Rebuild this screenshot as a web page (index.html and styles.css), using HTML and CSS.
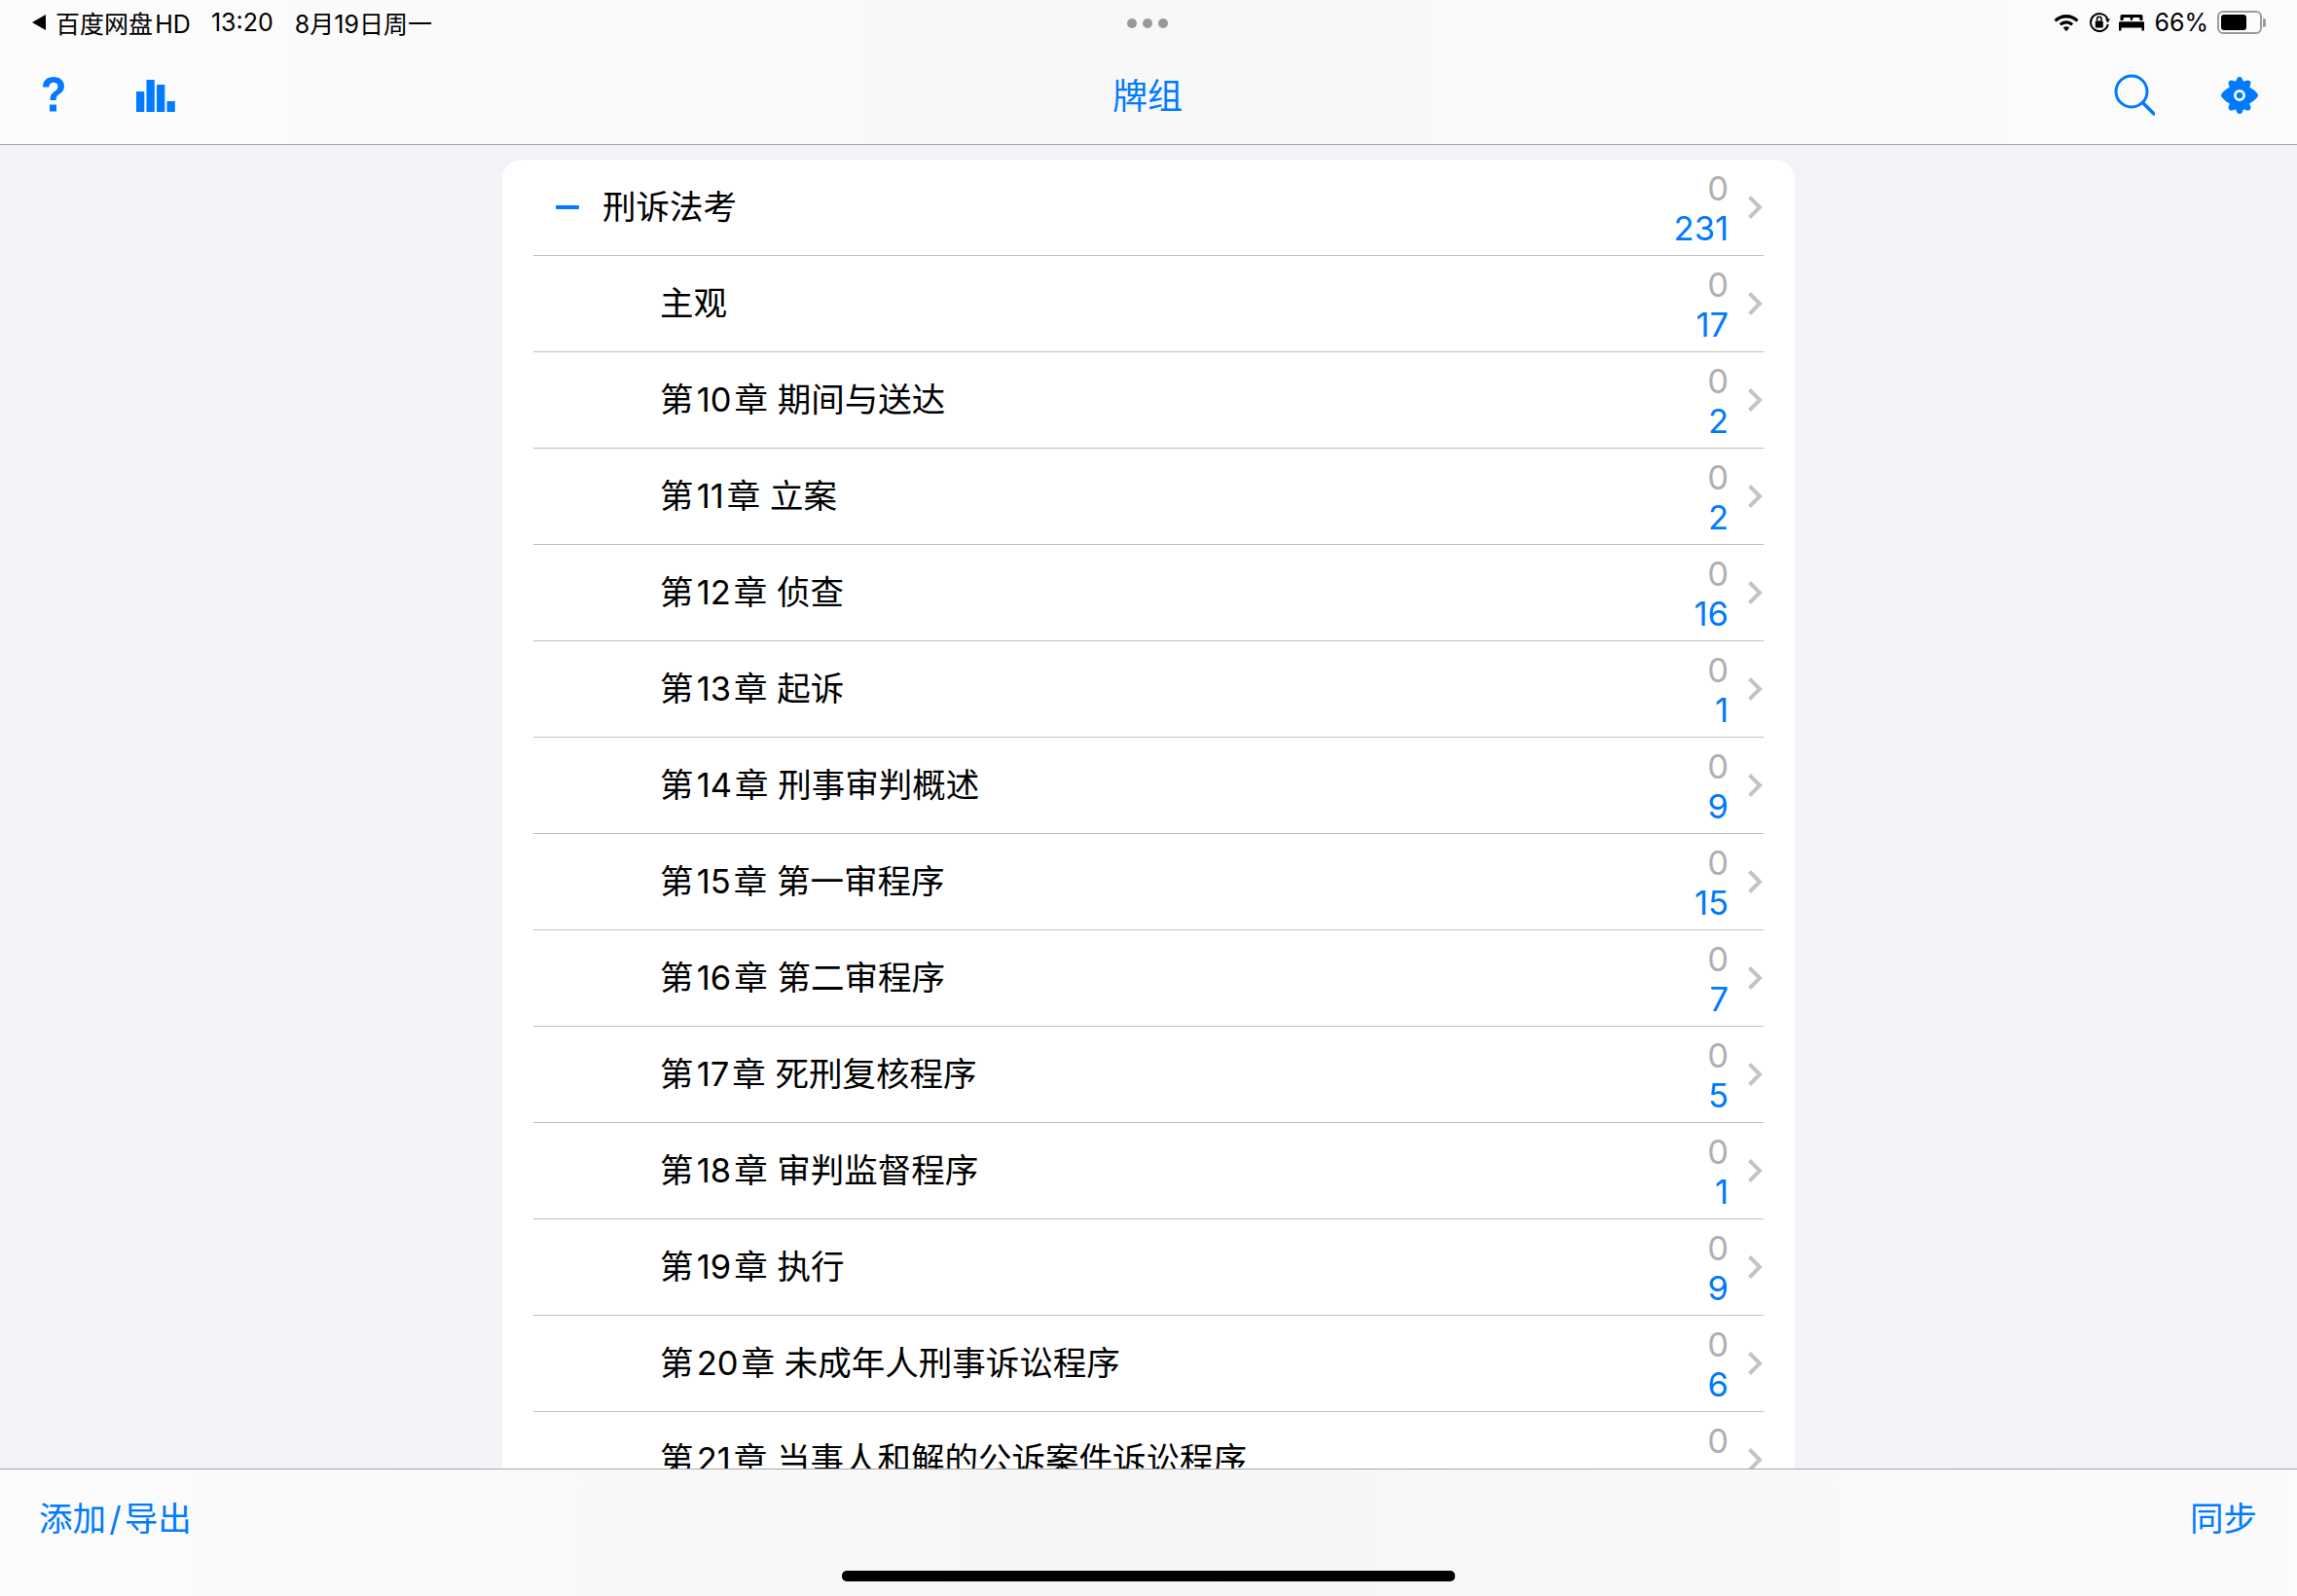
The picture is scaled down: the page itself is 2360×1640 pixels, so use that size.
FILE: index.html
```html
<!DOCTYPE html>
<html lang="zh-CN">
<head>
<meta charset="utf-8">
<title>牌组</title>
<link rel="stylesheet" href="styles.css">
</head>
<body>
<div class="screen">
  <header class="topbar">
    <div class="status">
      <div class="status-left">
        <svg class="back" width="14" height="16" viewBox="0 0 14 16"><path d="M14 0V16L0 8Z"/></svg>
        <span class="app">百度网盘&#8202;HD</span>
        <span class="time">13:20</span>
        <span>8月19日周一</span>
      </div>
      <div class="dots"><i></i><i></i><i></i></div>
      <div class="status-right">
        <svg width="28" height="22" viewBox="0 0 28 22"><path d="M14 3C9 3 4.800 5 1.500 8.200L3.600 10.600C6.300 7.900 10 6.400 14 6.400S21.700 7.900 24.400 10.600L26.500 8.200C23.200 5 19 3 14 3ZM14 9.200C11.300 9.200 8.800 10.300 6.800 12.200L9 14.600C10.400 13.300 12.100 12.500 14 12.500S17.600 13.300 19 14.600L21.200 12.200C19.200 10.300 16.700 9.200 14 9.200ZM14 15.200C12.800 15.200 11.700 15.700 10.800 16.500L14 20.200L17.200 16.500C16.300 15.700 15.200 15.200 14 15.200Z"/></svg>
        <svg class="lock" width="22" height="22" viewBox="0 0 22 22"><path d="M19.500 8A9 9 0 1 0 19.800 13" fill="none" stroke="#000" stroke-width="2"/><path d="M17 7.500H22L19.500 11.500Z"/><rect x="6.800" y="9.500" width="8" height="7" rx="1"/><path d="M8.500 9.500V7.500A2.300 2.300 0 0 1 13.100 7.500V9.500" fill="none" stroke="#000" stroke-width="1.500"/></svg>
        <svg class="bed" width="26" height="18" viewBox="0 0 26 18"><path d="M3 1H23A1.500 1.500 0 0 1 24.500 2.500V7H21.500V5.500A1.500 1.500 0 0 0 20 4H15.500A1.500 1.500 0 0 0 14 5.500V7H12V5.500A1.500 1.500 0 0 0 10.500 4H6A1.500 1.500 0 0 0 4.500 5.500V7H1.500V2.500A1.500 1.500 0 0 1 3 1ZM1 8.200H25A1 1 0 0 1 26 9.200V17.500H23.500V14.500H2.500V17.500H0V9.200A1 1 0 0 1 1 8.200Z"/></svg>
        <span class="pct">66%</span>
        <div class="battery"><div class="battery-fill"></div></div>
        <div class="battery-tip"></div>
      </div>
    </div>
    <nav class="navbar">
      <div class="nav-group">
        <svg class="ic-help" width="24" height="38" viewBox="0 0 24 38"><path d="M1 11.500C1 5 5.500 1 12 1C18.500 1 23 5 23 10.500C23 14.500 21 16.700 17.800 18.800C15.300 20.500 14.800 21.500 14.800 25H8.500C8.500 20.300 9.800 18.200 13 16C15.700 14.200 16.500 13 16.500 10.800C16.500 8.400 14.800 6.800 12 6.800C9.200 6.800 7.500 8.500 7.300 11.500ZM8 29.500H15V36.500H8Z"/></svg>
        <svg class="ic-chart" width="40" height="33" viewBox="0 0 40 33"><rect x="0" y="12" width="8.300" height="21"/><rect x="10.500" y="0" width="8.300" height="33"/><rect x="21" y="5" width="8.300" height="28"/><rect x="31.500" y="22" width="8.300" height="11"/></svg>
      </div>
      <h1 class="title">牌组</h1>
      <div class="nav-group nav-right">
        <svg class="ic-search" width="42" height="44" viewBox="0 0 42 44"><circle cx="18" cy="18" r="16" fill="none" stroke="#007aff" stroke-width="3"/><path d="M29.500 29.500L41 41" fill="none" stroke="#007aff" stroke-width="3.500" stroke-linecap="round"/></svg>
        <svg class="ic-gear" width="38" height="38" viewBox="0 0 38 38"><path fill-rule="evenodd" d="M19 0C20.800 0 21.700 1.200 22.300 3.300C22.600 4.400 23.700 4.900 24.700 4.300C26.800 3.200 28.300 3 29.600 4.300C30.900 5.600 30.700 7.200 29.600 9.200C29 10.200 29.500 11.300 30.600 11.600C32.700 12.300 38 17 38 19C38 21 32.700 25.700 30.600 26.400C29.500 26.700 29 27.800 29.600 28.800C30.700 30.800 30.900 32.400 29.600 33.700C28.300 35 26.800 34.800 24.700 33.700C23.700 33.100 22.600 33.600 22.300 34.700C21.700 36.800 20.800 38 19 38C17.200 38 16.300 36.800 15.700 34.700C15.400 33.600 14.300 33.100 13.300 33.700C11.200 34.800 9.700 35 8.400 33.700C7.100 32.400 7.300 30.800 8.400 28.800C9 27.800 8.500 26.700 7.400 26.400C5.300 25.700 0 21 0 19C0 17 5.300 12.300 7.400 11.600C8.500 11.300 9 10.200 8.400 9.200C7.300 7.200 7.100 5.600 8.400 4.300C9.700 3 11.200 3.200 13.300 4.300C14.300 4.900 15.400 4.400 15.700 3.300C16.300 1.200 17.200 0 19 0ZM19 13A6 6 0 1 0 19 25A6 6 0 1 0 19 13ZM19 15.800A3.200 3.200 0 1 1 19 22.200A3.200 3.200 0 1 1 19 15.800Z"/></svg>
      </div>
    </nav>
  </header>

  <main class="content">
    <section class="card">
      <div class="row row-parent"><span class="toggle"></span><span class="name">刑诉法考</span><div class="counts"><span class="c-new">0</span><span class="c-due">231</span></div><svg class="chev" width="16" height="26" viewBox="0 0 16 26"><path d="M2.500 2.500L13 13L2.500 23.500"/></svg></div>
      <div class="row"><span class="name">主观</span><div class="counts"><span class="c-new">0</span><span class="c-due">17</span></div><svg class="chev" width="16" height="26" viewBox="0 0 16 26"><path d="M2.500 2.500L13 13L2.500 23.500"/></svg></div>
      <div class="row"><span class="name">第&#8202;10&#8202;章 期间与送达</span><div class="counts"><span class="c-new">0</span><span class="c-due">2</span></div><svg class="chev" width="16" height="26" viewBox="0 0 16 26"><path d="M2.500 2.500L13 13L2.500 23.500"/></svg></div>
      <div class="row"><span class="name">第&#8202;11&#8202;章 立案</span><div class="counts"><span class="c-new">0</span><span class="c-due">2</span></div><svg class="chev" width="16" height="26" viewBox="0 0 16 26"><path d="M2.500 2.500L13 13L2.500 23.500"/></svg></div>
      <div class="row"><span class="name">第&#8202;12&#8202;章 侦查</span><div class="counts"><span class="c-new">0</span><span class="c-due">16</span></div><svg class="chev" width="16" height="26" viewBox="0 0 16 26"><path d="M2.500 2.500L13 13L2.500 23.500"/></svg></div>
      <div class="row"><span class="name">第&#8202;13&#8202;章 起诉</span><div class="counts"><span class="c-new">0</span><span class="c-due">1</span></div><svg class="chev" width="16" height="26" viewBox="0 0 16 26"><path d="M2.500 2.500L13 13L2.500 23.500"/></svg></div>
      <div class="row"><span class="name">第&#8202;14&#8202;章 刑事审判概述</span><div class="counts"><span class="c-new">0</span><span class="c-due">9</span></div><svg class="chev" width="16" height="26" viewBox="0 0 16 26"><path d="M2.500 2.500L13 13L2.500 23.500"/></svg></div>
      <div class="row"><span class="name">第&#8202;15&#8202;章 第一审程序</span><div class="counts"><span class="c-new">0</span><span class="c-due">15</span></div><svg class="chev" width="16" height="26" viewBox="0 0 16 26"><path d="M2.500 2.500L13 13L2.500 23.500"/></svg></div>
      <div class="row"><span class="name">第&#8202;16&#8202;章 第二审程序</span><div class="counts"><span class="c-new">0</span><span class="c-due">7</span></div><svg class="chev" width="16" height="26" viewBox="0 0 16 26"><path d="M2.500 2.500L13 13L2.500 23.500"/></svg></div>
      <div class="row"><span class="name">第&#8202;17&#8202;章 死刑复核程序</span><div class="counts"><span class="c-new">0</span><span class="c-due">5</span></div><svg class="chev" width="16" height="26" viewBox="0 0 16 26"><path d="M2.500 2.500L13 13L2.500 23.500"/></svg></div>
      <div class="row"><span class="name">第&#8202;18&#8202;章 审判监督程序</span><div class="counts"><span class="c-new">0</span><span class="c-due">1</span></div><svg class="chev" width="16" height="26" viewBox="0 0 16 26"><path d="M2.500 2.500L13 13L2.500 23.500"/></svg></div>
      <div class="row"><span class="name">第&#8202;19&#8202;章 执行</span><div class="counts"><span class="c-new">0</span><span class="c-due">9</span></div><svg class="chev" width="16" height="26" viewBox="0 0 16 26"><path d="M2.500 2.500L13 13L2.500 23.500"/></svg></div>
      <div class="row"><span class="name">第&#8202;20&#8202;章 未成年人刑事诉讼程序</span><div class="counts"><span class="c-new">0</span><span class="c-due">6</span></div><svg class="chev" width="16" height="26" viewBox="0 0 16 26"><path d="M2.500 2.500L13 13L2.500 23.500"/></svg></div>
      <div class="row"><span class="name">第&#8202;21&#8202;章 当事人和解的公诉案件诉讼程序</span><div class="counts"><span class="c-new">0</span><span class="c-due">1</span></div><svg class="chev" width="16" height="26" viewBox="0 0 16 26"><path d="M2.500 2.500L13 13L2.500 23.500"/></svg></div>
    </section>
  </main>

  <footer class="bottombar">
    <span class="bottom-link">添加&#8202;/&#8202;导出</span>
    <span class="bottom-link">同步</span>
    <div class="home"></div>
  </footer>
</div>
</body>
</html>
```
FILE: styles.css
```css
* { box-sizing: border-box; }
html, body { margin: 0; padding: 0; }
body { font-family: "Inter", "Noto Sans CJK SC", sans-serif; color: #000; background: #f2f2f7; }
.screen { width: 2360px; height: 1640px; display: flex; flex-direction: column; overflow: hidden; position: relative; }
.topbar { height: 149px; flex: none; background: linear-gradient(90deg, #fcfcfd, #f8f8f8 50%, #fcfcfd); border-bottom: 1px solid #a8a8a8; display: flex; flex-direction: column; }
.status { height: 46px; padding: 0 32px 0 30px; display: grid; grid-template-columns: 1fr auto 1fr; align-items: center; font-size: 25px; }
.status-left { display: flex; align-items: center; gap: 10px; white-space: nowrap; padding-left: 3px; }
.status-left .app { margin-right: 11px; }
.status-left .time { margin-right: 12px; }
.dots { display: flex; gap: 6px; margin-top: 2px; }
.dots i { display: block; width: 10px; height: 10px; border-radius: 50%; background: #999; }
.status-right { display: flex; align-items: center; justify-content: flex-end; gap: 9px; }
.pct { margin-left: 1px; }
.battery { width: 46px; height: 24px; border: 2px solid #9b9b9b; border-radius: 6px; padding: 2px; }
.battery-fill { width: 26px; height: 100%; background: #000; border-radius: 3px; }
.battery-tip { width: 3px; height: 9px; background: #9b9b9b; margin-left: -8px; border-radius: 0 2px 2px 0; }
.navbar { flex: 1; display: grid; grid-template-columns: 1fr auto 1fr; align-items: center; padding: 0 40px; }
.nav-group { display: flex; align-items: center; }
.nav-right { justify-content: flex-end; gap: 68px; }
.ic-help { fill: #007aff; margin-left: 3px; }
.ic-chart { fill: #007aff; margin-left: 73px; margin-top: 3px; }
.ic-search { margin-top: 2px; }
.ic-gear { fill: #007aff; margin-top: 2px; }
.title { margin: 0 2px 2px 0; font-size: 36px; font-weight: 400; color: #007aff; }
.content { flex: 1; min-height: 0; overflow: hidden; padding-top: 15px; display: flex; justify-content: center; }
.card { width: 1328px; height: fit-content; background: #fff; border-radius: 20px; padding: 0 32px; }
.row { height: 99px; display: flex; align-items: center; border-bottom: 1px solid #bfbfc1; padding-left: 130px; position: relative; }
.row-parent { padding-left: 23px; }
.toggle { width: 24px; height: 4px; border-radius: 1px; background: #007aff; margin-right: 24px; }
.name { font-size: 34.500px; flex: 1; white-space: nowrap; padding-bottom: 6px; }
.counts { display: flex; flex-direction: column; align-items: flex-end; font-size: 34.500px; line-height: 41px; margin-right: 19px; padding-top: 1px; }
.c-new { color: #b0b0b0; }
.c-due { color: #007aff; }
.chev { fill: none; stroke: #c4c4c6; stroke-width: 4; margin-right: 1px; }
.bottombar { height: 131px; flex: none; background: linear-gradient(90deg, #fcfcfd, #f6f6f6 50%, #fbfbfc); border-top: 1px solid #a8a8ac; display: flex; justify-content: space-between; padding: 29px 41px 0 40px; position: relative; z-index: 1; }
.bottom-link { color: #007aff; font-size: 34.500px; line-height: 44px; }
.home { position: absolute; left: 865px; bottom: 15px; width: 630px; height: 11px; border-radius: 5px; background: #000; }
```
